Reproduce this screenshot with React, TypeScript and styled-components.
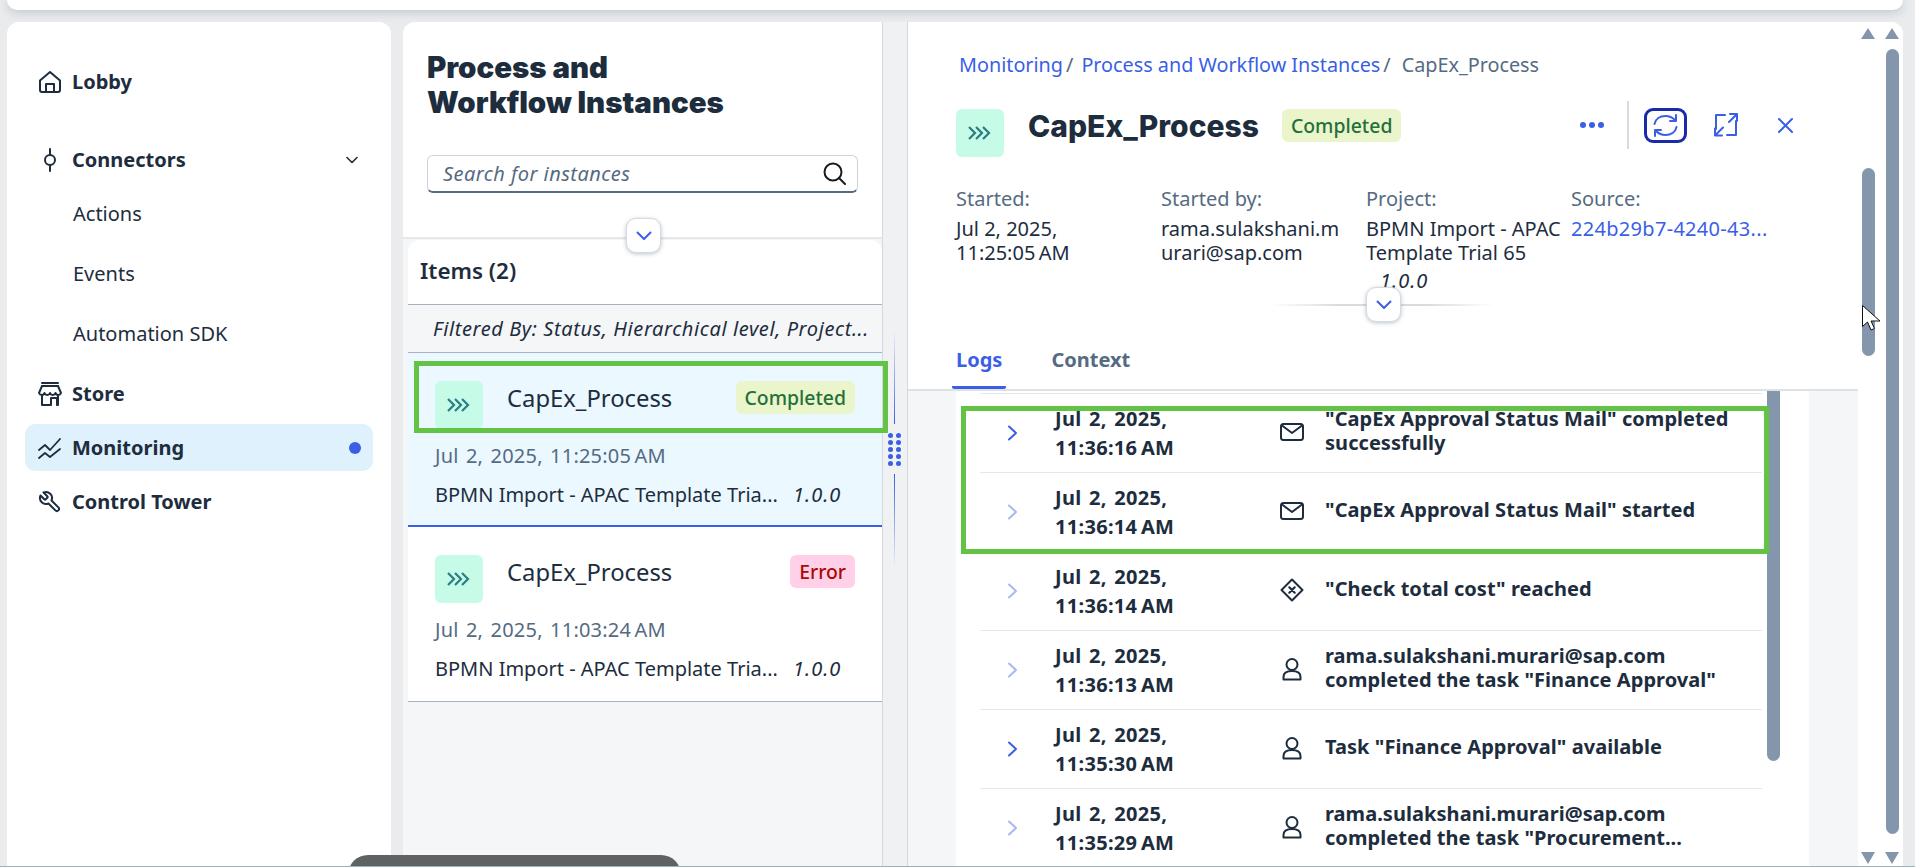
import React from "react";
import styled, { createGlobalStyle } from "styled-components";

const ink = "#1d2d3e";
const blue = "#3a5fe5";
const muted = "#556b82";

const GlobalStyle = createGlobalStyle`
  * { box-sizing: border-box; }
  html, body { margin: 0; padding: 0; height: 100%; overflow: hidden; }
  body { font-family: "Noto Sans", "Liberation Sans", sans-serif; color: ${ink}; }
`;

const Page = styled.div`
  position: relative;
  height: 867px;
  overflow: hidden;
  display: flex;
  flex-direction: column;
  padding: 0 12px 0 7px;
  background: #e9ebed;
  border-bottom: 1px solid #9fb0b6;
`;
const TopBar = styled.div`
  flex: 0 0 10px;
  background: #fff;
  border-radius: 0 0 12px 12px;
  box-shadow: 0 2px 10px rgba(85, 107, 130, 0.3);
`;
const Main = styled.div`
  flex: 1;
  min-height: 0;
  display: flex;
  margin-top: 12px;
`;

/* left navigation */
const Sidebar = styled.nav`
  flex: 0 0 384px;
  margin-right: 12px;
  padding: 36px 18px 0;
  background: #fff;
  border-radius: 12px 12px 0 0;
  display: flex;
  flex-direction: column;
  gap: 7px;
`;
const NavRow = styled.div<{ $active?: boolean; $spaced?: boolean }>`
  height: 47px;
  display: flex;
  align-items: center;
  gap: 10px;
  padding: 0 12px 0 13px;
  border-radius: 10px;
  font-size: 20px;
  font-weight: 700;
  margin-top: ${(p) => (p.$spaced ? "24px" : "0")};
  background: ${(p) => (p.$active ? "#dff1fd" : "transparent")};
`;
const NavDot = styled.span`
  margin-left: auto;
  width: 12px;
  height: 12px;
  border-radius: 50%;
  background: ${blue};
`;
const NavCaret = styled.svg`
  margin-left: auto;
  margin-right: 3px;
`;
const SubList = styled.div`
  margin: -7px 0 0;
  display: flex;
  flex-direction: column;
`;
const SubItem = styled.div`
  height: 60px;
  padding-left: 48px;
  display: flex;
  align-items: center;
  font-size: 20px;
`;

/* middle list column */
const ListColumn = styled.section`
  flex: 0 0 480px;
  display: flex;
  flex-direction: column;
  background: #f5f6f7;
  border-right: 1px solid #d5d9dd;
  border-radius: 12px 0 0 0;
`;
const ListHeader = styled.header`
  position: relative;
  flex: 0 0 217px;
  padding: 28px 24px 0;
  background: #fff;
  border-radius: 12px 0 0 0;
  border-bottom: 2px solid #e5e7e9;
`;
const Heading = styled.h1`
  margin: 0 0 35px;
  font-family: Inter, "Noto Sans", sans-serif;
  font-size: 29.4px;
  line-height: 35px;
  font-weight: 900;
`;
const SearchBox = styled.div`
  width: 431px;
  height: 38px;
  display: flex;
  align-items: center;
  justify-content: space-between;
  padding: 0 11px 0 15px;
  border: 1px solid #ccd3da;
  border-bottom: 2px solid ${muted};
  border-radius: 6px;
  font-size: 20px;
  letter-spacing: 0.45px;
  font-style: italic;
  color: ${muted};
`;
const CollapseButton = styled.div`
  position: absolute;
  width: 35px;
  height: 35px;
  display: flex;
  align-items: center;
  justify-content: center;
  background: #fff;
  border: 1px solid #d5dbe1;
  border-radius: 10px;
  box-shadow: 0 1px 4px rgba(85, 107, 130, 0.4);
`;
const ListCollapse = styled(CollapseButton)`
  left: 223px;
  bottom: -16px;
`;
const ListPanel = styled.div`
  margin: 1px 0 0 5px;
  flex: 1;
`;
const ItemsTitle = styled.div`
  height: 65px;
  padding: 0 0 3px 12px;
  display: flex;
  align-items: center;
  font-size: 22.4px;
  font-weight: 600;
  background: #fff;
  border-radius: 12px 12px 0 0;
  border-bottom: 1px solid #a8b3bf;
`;
const FilterBar = styled.div`
  height: 48px;
  padding-left: 25px;
  display: flex;
  align-items: center;
  font-size: 20px;
  letter-spacing: 0.6px;
  font-style: italic;
  white-space: nowrap;
  border-bottom: 1px solid #a8b3bf;
`;
const InstanceItem = styled.article<{ $selected?: boolean }>`
  padding: 28px 27px ${(p) => (p.$selected ? "18px" : "20px")};
  background: ${(p) => (p.$selected ? "#ebf8ff" : "#fff")};
  border-bottom: ${(p) => (p.$selected ? `2px solid ${blue}` : "1px solid #a8b3bf")};
`;
const ItemTop = styled.div`
  display: flex;
  align-items: flex-start;
  gap: 24px;
`;
const ProcessBadge = styled.div`
  flex: 0 0 48px;
  height: 48px;
  display: flex;
  align-items: center;
  justify-content: center;
  padding-right: 3px;
  background: #c6fbe8;
  border-radius: 6px;
`;
const ItemName = styled.div`
  margin-top: 1px;
  font-size: 23.8px;
  line-height: 32px;
`;
const StatusTag = styled.span<{ $error?: boolean }>`
  height: 33px;
  padding: 0 9px;
  display: inline-flex;
  align-items: center;
  border-radius: 6px;
  font-size: 19.4px;
  font-weight: 500;
  white-space: nowrap;
  color: ${(p) => (p.$error ? "#aa0808" : "#256f3a")};
  background: ${(p) => (p.$error ? "#ffd0e7" : "#ebf5cb")};
`;
const ItemTag = styled(StatusTag)`
  margin-left: auto;
`;
const ItemDate = styled.div`
  margin-top: 15px;
  font-size: 20px;
  line-height: 24px;
  letter-spacing: 0.2px;
  word-spacing: 2px;
  color: ${muted};
`;
const ItemProject = styled.div`
  margin-top: 15px;
  display: flex;
  font-size: 20px;
  line-height: 24px;
  white-space: nowrap;
`;
const ItemVersion = styled.span`
  position: absolute;
  margin-left: 358px;
  font-style: italic;
  letter-spacing: 1px;
`;

/* splitter */
const Splitter = styled.div`
  flex: 0 0 25px;
  display: flex;
  flex-direction: column;
  align-items: center;
  justify-content: flex-start;
  padding: 308px 2px 0 0;
  background: #eff1f2;
  border-right: 1px solid #d5d9dd;
`;
const SplitLine = styled.div<{ $down?: boolean }>`
  width: 1px;
  height: 94px;
  background: linear-gradient(${(p) => (p.$down ? "to top" : "to bottom")}, rgba(58, 95, 229, 0), ${blue});
`;
const GripDots = styled.div`
  margin: 9px 0 8px;
  display: grid;
  grid-template-columns: 5px 5px;
  gap: 2px 3px;
  span {
    width: 5px;
    height: 5px;
    border-radius: 50%;
    background: ${blue};
  }
`;

/* detail panel */
const DetailPanel = styled.section`
  flex: 1;
  min-width: 0;
  display: flex;
  background: #fff;
  border-radius: 0 12px 0 0;
  overflow: hidden;
`;
const DetailBody = styled.div`
  flex: 0 0 950px;
  display: flex;
  flex-direction: column;
`;
const DetailHeader = styled.header`
  position: relative;
  flex: 0 0 369px;
  display: flex;
  flex-direction: column;
  padding: 31px 65px 0 48px;
  background: #fff;
  border-bottom: 2px solid #dfe2e5;
`;
const Breadcrumb = styled.div`
  display: flex;
  font-size: 19.8px;
  line-height: 24px;
  color: ${muted};
  padding-left: 3px;
`;
const CrumbLink = styled.a`
  color: ${blue};
  &::after {
    content: "/";
    color: ${muted};
    margin: 0 8px 0 3px;
  }
`;
const CrumbCurrent = styled.span`
  margin-left: 3px;
`;
const TitleRow = styled.div`
  margin-top: 32px;
  display: flex;
  align-items: flex-start;
`;
const DetailTitle = styled.h2`
  margin: 0 23px 0 24px;
  font-family: Inter, "Noto Sans", sans-serif;
  font-size: 30px;
  line-height: 34px;
  font-weight: 800;
`;
const ActionBar = styled.div`
  margin: -8px 0 0 auto;
  height: 48px;
  display: flex;
  align-items: center;
`;
const ActionDivider = styled.div`
  width: 2px;
  height: 48px;
  margin: 0 15px 0 23px;
  background: #d9dcdf;
`;
const FocusedAction = styled.div`
  width: 43px;
  height: 35px;
  margin-right: 27px;
  display: flex;
  align-items: center;
  justify-content: center;
  border: 3px solid #1b2aa8;
  border-radius: 9px;
`;
const CloseIcon = styled.svg`
  margin-left: 40px;
`;
const MetaGrid = styled.dl`
  margin: 30px 0 0;
  display: grid;
  grid-template-columns: repeat(4, 205px);
  font-size: 20px;
  line-height: 24px;
`;
const MetaCell = styled.div`
  padding-right: 6px;
`;
const MetaLabel = styled.dt`
  margin-bottom: 6px;
  color: ${muted};
`;
const MetaValue = styled.dd<{ $link?: boolean; $breakAll?: boolean }>`
  margin: 0;
  max-width: ${(p) => (p.$breakAll ? "183px" : "none")};
  color: ${(p) => (p.$link ? blue : ink)};
  letter-spacing: ${(p) => (p.$link ? "0.3px" : "0")};
  word-break: ${(p) => (p.$breakAll ? "break-all" : "normal")};
  white-space: ${(p) => (p.$link ? "nowrap" : "normal")};
`;
const MetaVersion = styled.dd`
  margin: 4px 0 0 14px;
  font-style: italic;
  letter-spacing: 1px;
`;
const HeaderRule = styled.div`
  position: absolute;
  left: 362px;
  top: 282px;
  width: 225px;
  height: 2px;
  background: linear-gradient(to right, rgba(217, 220, 223, 0), #d9dcdf 30%, #d9dcdf 70%, rgba(217, 220, 223, 0));
`;
const DetailCollapse = styled(CollapseButton)`
  left: 458px;
  top: 265px;
`;
const Tabs = styled.div`
  margin: auto 0 0 -4px;
  display: flex;
  gap: 41px;
`;
const Tab = styled.div<{ $active?: boolean }>`
  padding: 0 4px 14px;
  font-size: 20px;
  line-height: 24px;
  font-weight: 700;
  color: ${(p) => (p.$active ? blue : muted)};
  border-bottom: 3px solid ${(p) => (p.$active ? blue : "transparent")};
  border-radius: 0 0 2px 2px;
`;

/* logs */
const LogArea = styled.div`
  flex: 1;
  min-height: 0;
  padding: 0 49px 0 48px;
  background: #f5f6f7;
`;
const LogCard = styled.div`
  height: 100%;
  display: flex;
  align-items: flex-start;
  padding-left: 24px;
  background: #fff;
`;
const LogRows = styled.div`
  flex: 0 0 782px;
  margin-top: 2px;
  border-top: 1px solid #e5e7e9;
`;
const LogRow = styled.div`
  height: 79px;
  display: grid;
  grid-template-columns: 75px 225px 45px 1fr;
  align-items: center;
  border-bottom: 1px solid #e5e7e9;
  font-size: 20px;
  font-weight: 700;
`;
const Chevron = styled.svg<{ $on?: boolean }>`
  margin-left: 27px;
  color: ${(p) => (p.$on ? blue : "#a9b8f0")};
`;
const LogDate = styled.div`
  line-height: 29px;
  letter-spacing: 0.3px;
  word-spacing: 2px;
`;
const LogIcon = styled.div`
  display: flex;
  justify-content: center;
  width: 24px;
  margin-top: -3px;
`;
const LogMessage = styled.div`
  line-height: 24px;
  letter-spacing: 0.05px;
  margin-top: -4px;
`;
const LogThumb = styled.div`
  flex: 0 0 13px;
  height: 370px;
  margin-left: 5px;
  background: #8396ab;
  border-radius: 0 0 7px 7px;
`;

/* page scrollbars */
const ScrollRail = styled.div<{ $width: number }>`
  flex: 0 0 ${(p) => p.$width}px;
  display: flex;
  flex-direction: column;
  padding: 6px 0 2px;
  background: #fff;
`;
const RailArrow = styled.div<{ $down?: boolean; $offset: number }>`
  width: 0;
  height: 0;
  margin-left: ${(p) => p.$offset}px;
  border-left: 7.5px solid transparent;
  border-right: 7.5px solid transparent;
  ${(p) => (p.$down ? "border-top: 12px solid #8396ab; margin-top: auto;" : "border-bottom: 11px solid #8396ab;")}
`;
const RailThumb = styled.div<{ $top: number; $height: number; $offset: number }>`
  width: 13px;
  height: ${(p) => p.$height}px;
  margin: ${(p) => p.$top}px 0 0 ${(p) => p.$offset}px;
  background: #8396ab;
  border-radius: 7px;
`;

/* things lying over the page */
const Highlight = styled.div`
  position: absolute;
  border: 5px solid #63c345;
  pointer-events: none;
`;
const ItemHighlight = styled(Highlight)`
  left: 414px;
  top: 361px;
  width: 474px;
  height: 72px;
`;
const LogHighlight = styled(Highlight)`
  left: 961px;
  top: 406px;
  width: 808px;
  height: 148px;
`;
const Snackbar = styled.div`
  position: absolute;
  left: 348px;
  top: 855px;
  width: 333px;
  height: 40px;
  background: #5e6262;
  border-radius: 22px;
`;
const Pointer = styled.svg`
  position: absolute;
  left: 1862px;
  top: 305px;
`;

const Stroke = ({ size = 24, w = 2, children }: { size?: number; w?: number; children: React.ReactNode }) => (
  <svg width={size} height={size} viewBox="0 0 24 24" fill="none" stroke={ink} strokeWidth={w} strokeLinecap="round" strokeLinejoin="round">
    {children}
  </svg>
);

const ProcessIcon = () => (
  <svg width="24" height="16" viewBox="0 0 24 16" fill="none" stroke="#2b7d83" strokeWidth="2.2">
    <path d="M2 2l6 6-6 6M9 2l6 6-6 6M16 2l6 6-6 6" />
  </svg>
);
const CaretDown = ({ color = blue }: { color?: string }) => (
  <svg width="16" height="10" viewBox="0 0 16 10" fill="none" stroke={color} strokeWidth="2" strokeLinecap="round" strokeLinejoin="round">
    <path d="M1.5 1.5L8 8l6.5-6.5" />
  </svg>
);
const MailIcon = () => (
  <svg width="24" height="18" viewBox="0 0 24 18" fill="none" stroke={ink} strokeWidth="2" strokeLinejoin="round" strokeLinecap="round">
    <rect x="1" y="1" width="22" height="16" rx="2.5" />
    <path d="M2 2.5l10 7.5 10-7.5" />
  </svg>
);
const GatewayIcon = () => (
  <Stroke>
    <path d="M12 1.5L22.5 12 12 22.5 1.5 12z" />
    <path d="M9.3 9.3l5.4 5.4M14.7 9.3l-5.4 5.4" strokeWidth="2.2" />
  </Stroke>
);
const PersonIcon = () => (
  <Stroke>
    <circle cx="12" cy="7.5" r="5.5" />
    <path d="M3.5 22.5v-2.5c0-3.5 3-6 8.5-6s8.5 2.500 8.500 6v2.500z" />
  </Stroke>
);

const logs = [
  { date: "11:36:16\u202fAM", icon: <MailIcon />, on: true, text: <>"CapEx Approval Status Mail" completed<br />successfully</> },
  { date: "11:36:14\u202fAM", icon: <MailIcon />, text: <>"CapEx Approval Status Mail" started</> },
  { date: "11:36:14\u202fAM", icon: <GatewayIcon />, text: <>"Check total cost" reached</> },
  { date: "11:36:13\u202fAM", icon: <PersonIcon />, text: <>rama.sulakshani.murari@sap.com<br />completed the task "Finance Approval"</> },
  { date: "11:35:30\u202fAM", icon: <PersonIcon />, on: true, text: <>Task "Finance Approval" available</> },
  { date: "11:35:29\u202fAM", icon: <PersonIcon />, text: <>rama.sulakshani.murari@sap.com<br />completed the task "Procurement...</> },
];

const Rail = ({ width, offset, top, height }: { width: number; offset: number; top: number; height: number }) => (
  <ScrollRail $width={width}>
    <RailArrow $offset={offset} />
    <RailThumb $top={top} $height={height} $offset={offset + 1} />
    <RailArrow $down $offset={offset} />
  </ScrollRail>
);

export default function App() {
  return (
    <Page>
      <GlobalStyle />
      <TopBar />
      <Main>
        <Sidebar>
          <NavRow>
            <Stroke>
              <path d="M2 10.500L12 2l10 8.500V20a2 2 0 0 1-2 2H4a2 2 0 0 1-2-2z" />
              <path d="M8 22v-8h8v8" />
            </Stroke>
            Lobby
          </NavRow>
          <NavRow $spaced>
            <Stroke>
              <circle cx="12" cy="12" r="5" />
              <path d="M12 1v6M12 17v6" />
            </Stroke>
            Connectors
            <NavCaret width="12" height="8" viewBox="0 0 12 8" fill="none" stroke={ink} strokeWidth="1.600" strokeLinecap="round" strokeLinejoin="round">
              <path d="M1 1.500l5 5 5-5" />
            </NavCaret>
          </NavRow>
          <SubList>
            <SubItem>Actions</SubItem>
            <SubItem>Events</SubItem>
            <SubItem>Automation SDK</SubItem>
          </SubList>
          <NavRow>
            <Stroke>
              <path d="M4 1h16M4 4h16" />
              <path d="M4 4L1 11c1 2.500 5 2.500 5.500 0 1 2.500 4.500 2.500 5.500 0 1 2.500 4.500 2.500 5.500 0 .5 2.500 4.500 2.500 5.500 0L20 4" />
              <path d="M4 13.500V23h9v-7h6v7M20 13.500V23" />
            </Stroke>
            Store
          </NavRow>
          <NavRow $active>
            <Stroke w={1.800}>
              <path d="M1 14l6-5 5 5L22 3" />
              <path d="M1 22l6-5 5 4 10-8" />
            </Stroke>
            Monitoring
            <NavDot />
          </NavRow>
          <NavRow>
            <Stroke>
              <g transform="translate(24,0) scale(-1,1)">
                <path d="M14.700 6.300a1 1 0 0 0 0 1.400l1.600 1.600a1 1 0 0 0 1.400 0l3.770-3.770a6 6 0 0 1-7.940 7.940l-6.910 6.910a2.120 2.120 0 0 1-3-3l6.910-6.910a6 6 0 0 1 7.940-7.940l-3.760 3.760z" />
              </g>
            </Stroke>
            Control Tower
          </NavRow>
        </Sidebar>

        <ListColumn>
          <ListHeader>
            <Heading>
              Process and
              <br />
              Workflow Instances
            </Heading>
            <SearchBox>
              Search for instances
              <svg width="23" height="23" viewBox="0 0 23 23" fill="none" stroke="#1a1a1a" strokeWidth="2" strokeLinecap="round">
                <circle cx="10" cy="10" r="8.500" />
                <path d="M16 16l6 6" />
              </svg>
            </SearchBox>
            <ListCollapse>
              <CaretDown />
            </ListCollapse>
          </ListHeader>
          <ListPanel>
            <ItemsTitle>Items (2)</ItemsTitle>
            <FilterBar>Filtered By: Status, Hierarchical level, Project...</FilterBar>
            <InstanceItem $selected>
              <ItemTop>
                <ProcessBadge>
                  <ProcessIcon />
                </ProcessBadge>
                <ItemName>CapEx_Process</ItemName>
                <ItemTag>Completed</ItemTag>
              </ItemTop>
              <ItemDate>Jul 2, 2025, 11:25:05{"\u202f"}AM</ItemDate>
              <ItemProject>
                BPMN Import - APAC Template Tria...
                <ItemVersion>1.0.0</ItemVersion>
              </ItemProject>
            </InstanceItem>
            <InstanceItem>
              <ItemTop>
                <ProcessBadge>
                  <ProcessIcon />
                </ProcessBadge>
                <ItemName>CapEx_Process</ItemName>
                <ItemTag $error>Error</ItemTag>
              </ItemTop>
              <ItemDate>Jul 2, 2025, 11:03:24{"\u202f"}AM</ItemDate>
              <ItemProject>
                BPMN Import - APAC Template Tria...
                <ItemVersion>1.0.0</ItemVersion>
              </ItemProject>
            </InstanceItem>
          </ListPanel>
        </ListColumn>

        <Splitter>
          <SplitLine />
          <GripDots>
            {Array.from({ length: 10 }, (_, i) => (
              <span key={i} />
            ))}
          </GripDots>
          <SplitLine $down />
        </Splitter>

        <DetailPanel>
          <DetailBody>
            <DetailHeader>
              <Breadcrumb>
                <CrumbLink>Monitoring</CrumbLink>
                <CrumbLink>Process and Workflow Instances</CrumbLink>
                <CrumbCurrent>CapEx_Process</CrumbCurrent>
              </Breadcrumb>
              <TitleRow>
                <ProcessBadge>
                  <ProcessIcon />
                </ProcessBadge>
                <DetailTitle>CapEx_Process</DetailTitle>
                <StatusTag>Completed</StatusTag>
                <ActionBar>
                  <svg width="24" height="6" viewBox="0 0 24 6" fill={blue}>
                    <circle cx="3" cy="3" r="3" />
                    <circle cx="12" cy="3" r="3" />
                    <circle cx="21" cy="3" r="3" />
                  </svg>
                  <ActionDivider />
                  <FocusedAction>
                    <svg width="25" height="25" viewBox="0 0 25 25" fill="none" stroke={blue} strokeWidth="2" strokeLinecap="round" strokeLinejoin="round">
                      <path d="M1.500 11C2.500 6 7 3 12.500 3c3.500 0 7 1.500 9.500 4" />
                      <path d="M23 2v6h-6" />
                      <path d="M23.500 14c-1 5-5.500 8-11 8-3.500 0-7-1.500-9.500-4" />
                      <path d="M2 23v-6h6" />
                    </svg>
                  </FocusedAction>
                  <svg width="24" height="24" viewBox="0 0 24 24" fill="none" stroke={blue} strokeWidth="2" strokeLinecap="round" strokeLinejoin="round">
                    <path d="M11 2H2v14M13 22h9V8" />
                    <path d="M15 9l8-8M16 1h7v7M9 14.500l-8 8M1 15.500v7h7" />
                  </svg>
                  <CloseIcon width="15" height="15" viewBox="0 0 15 15" fill="none" stroke={blue} strokeWidth="2" strokeLinecap="round">
                    <path d="M1 1l13 13M14 1L1 14" />
                  </CloseIcon>
                </ActionBar>
              </TitleRow>
              <MetaGrid>
                <MetaCell>
                  <MetaLabel>Started:</MetaLabel>
                  <MetaValue>
                    Jul 2, 2025,
                    <br />
                    11:25:05{"\u202f"}AM
                  </MetaValue>
                </MetaCell>
                <MetaCell>
                  <MetaLabel>Started by:</MetaLabel>
                  <MetaValue $breakAll>rama.sulakshani.murari@sap.com</MetaValue>
                </MetaCell>
                <MetaCell>
                  <MetaLabel>Project:</MetaLabel>
                  <MetaValue>BPMN Import - APAC Template Trial 65</MetaValue>
                  <MetaVersion>1.0.0</MetaVersion>
                </MetaCell>
                <MetaCell>
                  <MetaLabel>Source:</MetaLabel>
                  <MetaValue $link>224b29b7-4240-43...</MetaValue>
                </MetaCell>
              </MetaGrid>
              <HeaderRule />
              <DetailCollapse>
                <CaretDown />
              </DetailCollapse>
              <Tabs>
                <Tab $active>Logs</Tab>
                <Tab>Context</Tab>
              </Tabs>
            </DetailHeader>
            <LogArea>
              <LogCard>
                <LogRows>
                  {logs.map((log, i) => (
                    <LogRow key={i}>
                      <Chevron $on={log.on} width="11" height="16" viewBox="0 0 11 16" fill="none" stroke="currentColor" strokeWidth="2" strokeLinecap="round" strokeLinejoin="round">
                        <path d="M2 1.500L9 8l-7 6.500" />
                      </Chevron>
                      <LogDate>
                        Jul 2, 2025,
                        <br />
                        {log.date}
                      </LogDate>
                      <LogIcon>{log.icon}</LogIcon>
                      <LogMessage>{log.text}</LogMessage>
                    </LogRow>
                  ))}
                </LogRows>
                <LogThumb />
              </LogCard>
            </LogArea>
          </DetailBody>
          <Rail width={22} offset={3} top={129} height={188} />
          <Rail width={23} offset={5} top={10} height={785} />
        </DetailPanel>
      </Main>

      <ItemHighlight />
      <LogHighlight />
      <Snackbar />
      <Pointer width="20" height="30" viewBox="0 0 20 30">
        <path d="M.5.500v21l5-4.500 3.500 8 3.500-1.500-3.500-7.500H18z" fill="#fff" stroke="#111" strokeWidth="1" strokeLinejoin="round" />
      </Pointer>
    </Page>
  );
}
